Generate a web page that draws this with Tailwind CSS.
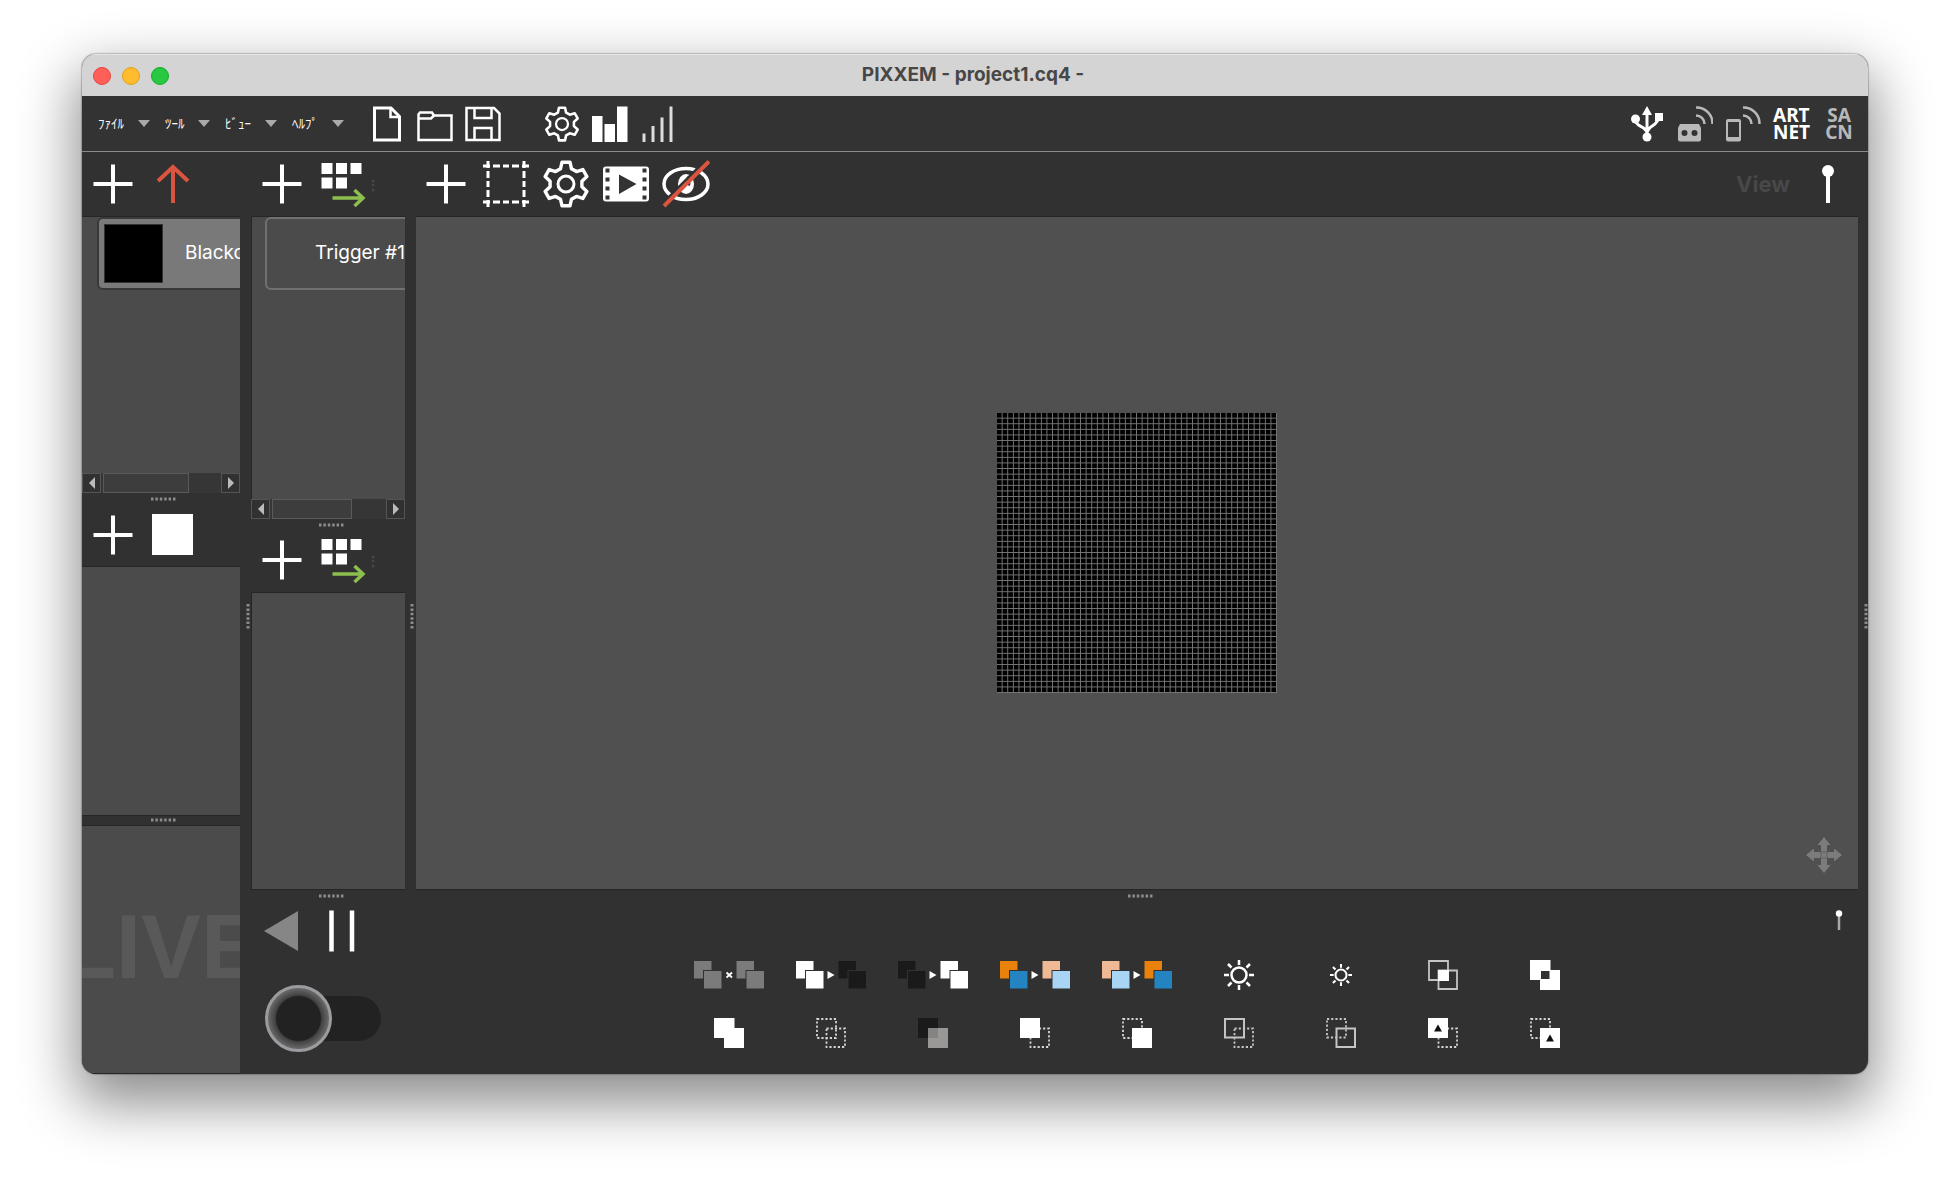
<!DOCTYPE html>
<html lang="ja">
<head>
<meta charset="UTF-8" />
<meta name="viewport" content="width=device-width, initial-scale=1.0"/>
<title>PIXXEM - project1.cq4 -</title>
<script src="https://cdn.jsdelivr.net/npm/@tailwindcss/browser@4"></script>
</head>
<body class="bg-white min-h-screen flex flex-col px-[82px] pt-[54px] pb-[108px] font-['Inter','Noto_Sans_CJK_JP',sans-serif]">

<!-- shared icons -->
<svg class="hidden">
  <symbol id="plus" viewBox="0 0 48 48"><path d="M24 4.500V43.500M4.500 24H43.500" stroke="#fff" stroke-width="4"/></symbol>
  <symbol id="gear" viewBox="-24 -24 48 48">
    <path d="M-5.500-15.200L-4-21.800H4L5.500-15.200L10.400-12.400L16.900-14.400L20.900-7.400L15.900-2.800V2.800L20.900 7.400L16.900 14.400L10.400 12.400L5.500 15.200L4 21.800H-4L-5.500 15.200L-10.400 12.400L-16.900 14.400L-20.900 7.400L-15.900 2.800V-2.800L-20.900-7.400L-16.900-14.400L-10.400-12.400Z" fill="none" stroke="#fff" stroke-width="3.400" stroke-linejoin="round"/>
    <circle r="8" fill="none" stroke="#fff" stroke-width="3"/>
  </symbol>
  <symbol id="cells" viewBox="0 0 48 48">
    <path d="M3.500 3h11v11h-11zM18 3h11v11H18zM32.500 3h11v11h-11zM3.500 17.500h11v11h-11zM18 17.500h11v11H18z" fill="#fff"/>
    <path d="M14.500 38H45M36.500 30L45 38L36.500 46" fill="none" stroke="#8dbf4f" stroke-width="3.500"/>
  </symbol>
  <symbol id="dots-h" viewBox="0 0 26 4"><path d="M1 2H26" stroke="#8c8c8c" stroke-width="3" stroke-dasharray="2.500 1.900"/></symbol>
  <symbol id="dots-v" viewBox="0 0 4 26"><path d="M2 1V26" stroke="#8c8c8c" stroke-width="3" stroke-dasharray="2.500 1.900"/></symbol>
  <symbol id="waves" viewBox="0 0 18 18"><path d="M0 1.500A16 16 0 0 1 16.500 18M0 9.500A8.500 8.500 0 0 1 8.500 18" fill="none" stroke="#b9b9b9" stroke-width="2.500"/></symbol>
</svg>

<main class="flex-1 flex flex-col rounded-[14px] overflow-hidden bg-[#313131] shadow-[0_0_1px_1px_rgba(0,0,0,0.2),0_24px_56px_6px_rgba(0,0,0,0.45)]">

  <!-- title bar -->
  <header class="h-[42px] bg-[#d4d4d4] border-t border-[#e6e6e6] flex items-center px-[11px]">
    <div class="flex-1 flex gap-[11px]">
      <button aria-label="閉じる" class="size-[18px] rounded-full bg-[#ff5f57] border border-[#e2463f]"></button>
      <button aria-label="最小化" class="size-[18px] rounded-full bg-[#febc2e] border border-[#e1a116]"></button>
      <button aria-label="最大化" class="size-[18px] rounded-full bg-[#28c840] border border-[#12ac28]"></button>
    </div>
    <h1 class="text-[19px] font-bold text-[#474747] pr-1">PIXXEM - project1.cq4 -</h1>
    <div class="flex-1"></div>
  </header>

  <!-- menu bar -->
  <nav class="h-14 bg-[#333] border-b border-[#8a8a8a] flex items-center pl-4 pr-[11px] text-[13px] text-white">
    <button class="w-[67px] flex items-center justify-between pr-[15px]">ﾌｧｲﾙ<svg class="w-3 h-[7px]" viewBox="0 0 12 7"><path d="M0 0H12L6 7Z" fill="#aaa"/></svg></button>
    <button class="w-[60px] flex items-center justify-between pr-[15px]">ﾂｰﾙ<svg class="w-3 h-[7px]" viewBox="0 0 12 7"><path d="M0 0H12L6 7Z" fill="#aaa"/></svg></button>
    <button class="w-[67px] flex items-center justify-between pr-[15px]">ﾋﾞｭｰ<svg class="w-3 h-[7px]" viewBox="0 0 12 7"><path d="M0 0H12L6 7Z" fill="#aaa"/></svg></button>
    <button class="w-[67px] flex items-center justify-between pr-[15px]">ﾍﾙﾌﾟ<svg class="w-3 h-[7px]" viewBox="0 0 12 7"><path d="M0 0H12L6 7Z" fill="#aaa"/></svg></button>

    <div class="flex gap-3 ml-[10px]">
      <button aria-label="新規"><svg class="size-9" viewBox="0 0 36 36" fill="none" stroke="#fff" stroke-width="3"><path d="M5.500 2H22L30.500 10.500V34H5.500Z"/><path d="M21.500 2V11H30.500" stroke-width="2.500"/></svg></button>
      <button aria-label="開く"><svg class="size-9" viewBox="0 0 36 36" fill="none" stroke="#fff" stroke-width="2.500"><path d="M1.500 34V8.500L3 6.500H15L17 9.500H34.500V34Z"/><path d="M2 12.500H14L17 9.500"/></svg></button>
      <button aria-label="保存"><svg class="size-9" viewBox="0 0 36 36" fill="none" stroke="#fff" stroke-width="2.500"><path d="M1.500 2H29L34.500 7.500V34H1.500Z"/><path d="M9.500 2V12H26.500V2M9.500 34V22H26.500V34"/></svg></button>
    </div>
    <div class="flex gap-3 ml-[43px]">
      <button aria-label="設定"><svg class="size-9"><use href="#gear"/></svg></button>
      <button aria-label="レベル"><svg class="size-9" viewBox="0 0 36 36" fill="#fff"><path d="M0 10H10.500V36H0ZM12.500 18H23V36H12.500ZM25 .500H35.500V36H25Z"/></svg></button>
      <button aria-label="信号"><svg class="size-9" viewBox="0 0 36 36" stroke="#ddd" stroke-width="3"><path d="M4 27.500V36M13 20V36M22 11.500V36M31 .500V36"/></svg></button>
    </div>

    <div class="flex-1"></div>
    <div class="flex gap-3">
      <button aria-label="USB"><svg class="size-9" viewBox="0 0 36 36"><path d="M18 5V32M6.500 14C6.500 21 17 20 17.500 26M29.500 11C29.500 20 19 19 18.500 26" fill="none" stroke="#fff" stroke-width="3"/><path d="M18 0L23 9H13ZM26 7H34V15H26Z" fill="#fff"/><circle cx="6.500" cy="13" r="4.500" fill="#fff"/><circle cx="18" cy="31" r="4.500" fill="#fff"/></svg></button>
      <button aria-label="リモート"><svg class="size-9" viewBox="0 0 36 36"><path d="M3 18H22L24 22V33.500Q24 35.500 22 35.500H3Q1 35.500 1 33.500V22Z" fill="#b9b9b9"/><circle cx="7.500" cy="27" r="3" fill="#333"/><circle cx="17.500" cy="27" r="3" fill="#333"/><use href="#waves" x="19" y="0" width="18" height="18"/></svg></button>
      <button aria-label="モバイル"><svg class="size-9" viewBox="0 0 36 36"><rect x="1" y="13" width="15" height="22.500" rx="2" fill="#b9b9b9"/><path d="M3 16H14V31H3Z" fill="#333"/><use href="#waves" x="18" y="0" width="18" height="18"/></svg></button>
      <button class="w-9 font-['Noto_Sans'] font-bold text-[19px] leading-[17px]">ART<br>NET</button>
      <button class="w-9 font-['Noto_Sans'] font-bold text-[19px] leading-[17px] text-[#b9b9b9]">SA<br>CN</button>
    </div>
  </nav>

  <div class="flex-1 flex">

    <!-- scenes -->
    <section class="w-[158px] flex flex-col border-b border-[#262626]">
      <div class="h-16 flex items-center gap-3 pl-[7px]">
        <button aria-label="シーン追加"><svg class="size-12"><use href="#plus"/></svg></button>
        <button aria-label="上へ"><svg class="size-12" viewBox="0 0 48 48"><path d="M24 6V43M9 21L24 7L39 21" fill="none" stroke="#d9553f" stroke-width="4"/></svg></button>
      </div>
      <div class="flex-278 min-h-0 flex flex-col">
        <div class="flex-1 bg-[#4b4b4b] border-t border-[#262626] pl-[15px] overflow-hidden">
          <button class="w-[280px] h-[73px] bg-[#797979] border-2 border-[#393939] rounded-md flex items-center gap-[22px] pl-[5px] text-[19px] text-white">
            <span class="size-[59px] bg-black border border-[#333]"></span>Blackout
          </button>
        </div>
        <div class="h-5 bg-[#363636] flex justify-between">
          <button aria-label="左へ" class="w-[19px] bg-[#313131] border border-[#555] flex items-center justify-center"><svg class="w-[6px] h-3" viewBox="0 0 6 12"><path d="M6 0V12L0 6Z" fill="#bbb"/></svg></button>
          <div class="flex-1 px-[2px]"><div class="w-[86px] h-5 bg-[#3d3d3d] border border-[#5a5a5a]"></div></div>
          <button aria-label="右へ" class="w-[19px] bg-[#313131] border border-[#555] flex items-center justify-center"><svg class="w-[6px] h-3" viewBox="0 0 6 12"><path d="M0 0V12L6 6Z" fill="#bbb"/></svg></button>
        </div>
      </div>
      <div class="h-3 flex items-center justify-center pl-1"><svg class="w-[26px] h-1"><use href="#dots-h"/></svg></div>
      <div class="h-[61px] flex items-center gap-3 pl-[7px] pb-[2px]">
        <button aria-label="色追加"><svg class="size-12"><use href="#plus"/></svg></button>
        <button aria-label="色" class="size-[41px] ml-[3px] bg-white"></button>
      </div>
      <div class="flex-248 bg-[#4b4b4b] border-y border-[#262626]"></div>
      <div class="h-[9px] flex items-center justify-center pl-1"><svg class="w-[26px] h-1"><use href="#dots-h"/></svg></div>
      <div class="flex-248 bg-[#4b4b4b] border-t border-[#262626] flex items-center justify-center overflow-hidden font-['Liberation_Sans'] font-bold text-[90px] leading-[90px] text-[#595959]"><span class="pb-1">LIVE</span></div>
    </section>

    <div class="w-[11px] flex items-center justify-center pt-[6px] pl-[4px]"><svg class="w-1 h-[26px]"><use href="#dots-v"/></svg></div>

    <!-- triggers -->
    <section class="w-[154px] flex flex-col">
      <div class="h-16 flex items-center gap-3 pl-[7px]">
        <button aria-label="トリガー追加"><svg class="size-12"><use href="#plus"/></svg></button>
        <button aria-label="割り当て"><svg class="size-12"><use href="#cells"/></svg></button>
        <span class="-ml-3 text-[14px] font-bold text-[#4a4a4a]">⋮</span>
      </div>
      <div class="flex-303 min-h-0 flex flex-col">
        <div class="flex-1 bg-[#4b4b4b] border-t border-l border-[#262626] pl-[13px] overflow-hidden">
          <button class="w-[280px] h-[73px] border-2 border-[#707070] rounded-md pl-12 text-left text-[19px] text-white">Trigger #1</button>
        </div>
        <div class="h-5 bg-[#363636] flex justify-between">
          <button aria-label="左へ" class="w-[19px] bg-[#313131] border border-[#555] flex items-center justify-center"><svg class="w-[6px] h-3" viewBox="0 0 6 12"><path d="M6 0V12L0 6Z" fill="#bbb"/></svg></button>
          <div class="flex-1 px-[2px]"><div class="w-20 h-5 bg-[#3d3d3d] border border-[#5a5a5a]"></div></div>
          <button aria-label="右へ" class="w-[19px] bg-[#313131] border border-[#555] flex items-center justify-center"><svg class="w-[6px] h-3" viewBox="0 0 6 12"><path d="M0 0V12L6 6Z" fill="#bbb"/></svg></button>
        </div>
      </div>
      <div class="h-3 flex items-center justify-center pl-[6px]"><svg class="w-[26px] h-1"><use href="#dots-h"/></svg></div>
      <div class="h-[61px] flex items-center gap-3 pl-[7px] pb-[2px]">
        <button aria-label="グループ追加"><svg class="size-12"><use href="#plus"/></svg></button>
        <button aria-label="割り当て"><svg class="size-12"><use href="#cells"/></svg></button>
        <span class="-ml-3 text-[14px] font-bold text-[#4a4a4a]">⋮</span>
      </div>
      <div class="flex-297 bg-[#4b4b4b] border-y border-l border-[#262626]"></div>
      <!-- transport -->
      <div class="h-[184px] flex flex-col">
        <div class="h-3 flex items-center justify-center pl-[6px]"><svg class="w-[26px] h-1"><use href="#dots-h"/></svg></div>
        <div class="h-[60px] flex items-center gap-3 pl-[7px] pb-[2px]">
          <button aria-label="逆再生"><svg class="size-12" viewBox="0 0 48 48"><path d="M40 4V44L6 24Z" fill="#868686"/></svg></button>
          <button aria-label="一時停止"><svg class="size-12" viewBox="0 0 48 48"><path d="M13.500 3.500V44.500M34 3.500V44.500" stroke="#fff" stroke-width="4.500"/></svg></button>
        </div>
        <div class="pt-[34px] pl-[22px]">
          <input type="checkbox" aria-label="再生スイッチ" class="block relative appearance-none w-[108px] h-[45px] rounded-full bg-[#222] before:absolute before:-left-2 before:-top-[11px] before:size-[67px] before:rounded-full before:border-3 before:border-[#9c9ca0] before:bg-[radial-gradient(closest-side,#222_72%,#404040_76%,#6a6a6a_100%)]">
        </div>
      </div>
    </section>

    <div class="w-[11px] flex items-center justify-center pt-[6px] pl-[2px]"><svg class="w-1 h-[26px]"><use href="#dots-v"/></svg></div>

    <!-- canvas -->
    <section class="flex-1 flex flex-col">
      <div class="h-16 flex items-center gap-3 pl-[6px]">
        <button aria-label="追加"><svg class="size-12"><use href="#plus"/></svg></button>
        <button aria-label="選択"><svg class="size-12" viewBox="0 0 48 48" fill="none" stroke="#fff" stroke-width="3" stroke-dasharray="7 3 7 3 6 3 7 3 7"><path d="M1 6H47"/><path d="M1 42H47"/><path d="M6 1V47"/><path d="M42 1V47"/></svg></button>
        <button aria-label="設定"><svg class="size-12"><use href="#gear"/></svg></button>
        <button aria-label="動画"><svg class="size-12" viewBox="0 0 48 48"><rect x="1" y="6.500" width="46" height="35" rx="3" fill="#fff"/><path d="M17 14.500V34L34.500 24ZM3.500 8.500h4v4h-4zM3.500 17.500h4v4h-4zM3.500 26.500h4v4h-4zM3.500 35.500h4v4h-4zM40.500 8.500h4v4h-4zM40.500 17.500h4v4h-4zM40.500 26.500h4v4h-4zM40.500 35.500h4v4h-4z" fill="#333"/></svg></button>
        <button aria-label="表示切替"><svg class="size-12" viewBox="0 0 48 48"><ellipse cx="24" cy="24" rx="22" ry="15.500" fill="none" stroke="#fff" stroke-width="3.500"/><ellipse cx="24" cy="24" rx="8" ry="10" fill="#fff"/><path d="M27 17A5 5 0 0 0 28 25" fill="none" stroke="#313131" stroke-width="3"/><path d="M-1 45.500L44 0" stroke="#313131" stroke-width="3"/><path d="M2 46L47 1.500" stroke="#d9553f" stroke-width="4"/></svg></button>
        <div class="flex-1"></div>
        <span class="text-[22px] font-bold text-[#484848] mr-[2px]">View</span>
        <button aria-label="ピン留め" class="mr-[6px]"><svg class="size-12" viewBox="0 0 48 48"><path d="M24 10V43" stroke="#fff" stroke-width="4"/><circle cx="24" cy="11" r="6" fill="#fff"/></svg></button>
      </div>
      <div class="relative flex-1 flex items-center justify-center bg-[#505050] border-y border-[#262626]">
        <!-- 50 x 50 pixel matrix -->
        <svg class="size-[280px]" viewBox="0 0 280 280" shape-rendering="crispEdges">
          <defs><pattern id="px" width="5.600" height="5.600" patternUnits="userSpaceOnUse"><rect width="4.400" height="4.400" fill="#000"/></pattern></defs>
          <rect width="280" height="280" fill="#777"/>
          <rect width="280" height="280" fill="url(#px)"/>
        </svg>
        <button aria-label="移動" class="absolute right-4 bottom-4"><svg class="size-9" viewBox="0 0 36 36"><path d="M18 0L24.500 8H21V15H28V11.500L36 18L28 24.500V21H21V28H24.500L18 36L11.500 28H15V21H8V24.500L0 18L8 11.500V15H15V8H11.500Z" fill="#7c7c7c"/><path d="M15 15H21V21H15Z" fill="none" stroke="#606060"/></svg></button>
      </div>

      <!-- effects -->
      <div class="h-[184px] flex flex-col">
        <div class="h-3 flex items-center justify-center pl-[6px]"><svg class="w-[26px] h-1"><use href="#dots-h"/></svg></div>
        <div class="h-11 flex justify-end pt-2 pr-[13px]">
          <button aria-label="ピン留め" class="h-5"><svg class="w-3 h-5" viewBox="0 0 12 20"><path d="M6 4V20" stroke="#a8a8a8" stroke-width="2.500"/><circle cx="6" cy="3.500" r="3.200" fill="#fff"/></svg></button>
        </div>
        <div class="mx-auto grid grid-cols-[repeat(9,102px)] auto-rows-[58px] items-center justify-items-center">
          <button aria-label="なし"><svg class="w-[70px] h-7" viewBox="0 0 70 28"><path d="M0 0h17.500v9H9v8.500H0zM10 10h17.500v17.500H10zM42.500 0H60v9h-8.500v8.500h-9zM52.500 10H70v17.500H52.500z" fill="#7b7b7b"/><path d="M32.500 11.500L38 16.500M38 11.500L32.500 16.500" stroke="#fff" stroke-width="1.800"/></svg></button>
          <button aria-label="白から黒"><svg class="w-[70px] h-7" viewBox="0 0 70 28"><path d="M0 0h17.500v9H9v8.500H0zM10 10h17.500v17.500H10z" fill="#fff"/><path d="M42.500 0H60v9h-8.500v8.500h-9zM52.500 10H70v17.500H52.500z" fill="#1a1a1a"/><path d="M31.500 10V18L38.500 14Z" fill="#fff"/></svg></button>
          <button aria-label="黒から白"><svg class="w-[70px] h-7" viewBox="0 0 70 28"><path d="M0 0h17.500v9H9v8.500H0zM10 10h17.500v17.500H10z" fill="#1a1a1a"/><path d="M42.500 0H60v9h-8.500v8.500h-9zM52.500 10H70v17.500H52.500z" fill="#fff"/><path d="M31.500 10V18L38.500 14Z" fill="#fff"/></svg></button>
          <button aria-label="彩度ダウン"><svg class="w-[70px] h-7" viewBox="0 0 70 28"><path d="M0 0h17.500v9H9v8.500H0z" fill="#e8820c"/><path d="M10 10h17.500v17.500H10z" fill="#2484c2"/><path d="M42.500 0H60v9h-8.500v8.500h-9z" fill="#f0b995"/><path d="M52.500 10H70v17.500H52.500z" fill="#a9d5f5"/><path d="M31.500 10V18L38.500 14Z" fill="#fff"/></svg></button>
          <button aria-label="彩度アップ"><svg class="w-[70px] h-7" viewBox="0 0 70 28"><path d="M0 0h17.500v9H9v8.500H0z" fill="#f0b995"/><path d="M10 10h17.500v17.500H10z" fill="#a9d5f5"/><path d="M42.500 0H60v9h-8.500v8.500h-9z" fill="#e8820c"/><path d="M52.500 10H70v17.500H52.500z" fill="#2484c2"/><path d="M31.500 10V18L38.500 14Z" fill="#fff"/></svg></button>
          <button aria-label="明るく"><svg class="size-[30px]" viewBox="0 0 30 30" fill="none" stroke="#fff" stroke-width="2.500"><circle cx="15" cy="15" r="7.500"/><path d="M15 0V5M15 25V30M0 15H5M25 15H30M4 4L7.500 7.500M22.500 22.500L26 26M26 4L22.500 7.500M4 26L7.500 22.500"/></svg></button>
          <button aria-label="暗く"><svg class="size-[22px]" viewBox="0 0 30 30" fill="none" stroke="#fff" stroke-width="2.800"><circle cx="15" cy="15" r="7.500"/><path d="M15 0V5M15 25V30M0 15H5M25 15H30M4 4L7.500 7.500M22.500 22.500L26 26M26 4L22.500 7.500M4 26L7.500 22.500"/></svg></button>
          <button aria-label="交差"><svg class="size-[30px]" viewBox="0 0 30 30" fill="none" stroke="#c4c4c4" stroke-width="1.800"><path d="M1 1H20V20H1ZM10.500 10.500H29V29H10.500Z"/><path d="M11 11H20V20H11Z" fill="#fff" stroke="#fff"/></svg></button>
          <button aria-label="除外"><svg class="size-[30px]" viewBox="0 0 30 30"><path d="M0 0H20.500V10H30V30H10V20H0ZM11 11V19H19.500V11Z" fill="#fff" fill-rule="evenodd"/></svg></button>

          <button aria-label="合成"><svg class="size-[30px]" viewBox="0 0 30 30"><path d="M0 0H20.500V10H30V30H10V20H0Z" fill="#fff"/></svg></button>
          <button aria-label="両方解除"><svg class="size-[30px]" viewBox="0 0 30 30" fill="none" stroke="#d4d4d4" stroke-width="1.800" stroke-dasharray="2.200 2"><path d="M1 1H20V20H1Z"/><path d="M10.500 10.500H29V29H10.500Z"/></svg></button>
          <button aria-label="半透明"><svg class="size-[30px]" viewBox="0 0 30 30"><path d="M0 0H20V20H0Z" fill="#1a1a1a"/><path d="M10 10H30V30H10Z" fill="#9a9797"/><path d="M10 10H20V20H10Z" fill="#868383"/></svg></button>
          <button aria-label="A を前面"><svg class="size-[30px]" viewBox="0 0 30 30"><path d="M10.500 10.500H29V29H10.500Z" fill="none" stroke="#d4d4d4" stroke-width="1.800" stroke-dasharray="2.200 2"/><path d="M0 0H20V20H0Z" fill="#fff"/></svg></button>
          <button aria-label="B を前面"><svg class="size-[30px]" viewBox="0 0 30 30"><path d="M1 1H20V20H1Z" fill="none" stroke="#d4d4d4" stroke-width="1.800" stroke-dasharray="2.200 2"/><path d="M10 10H30V30H10Z" fill="#fff"/></svg></button>
          <button aria-label="A の枠"><svg class="size-[30px]" viewBox="0 0 30 30" fill="none" stroke="#c4c4c4" stroke-width="2"><path d="M1 1H20V19.500H1Z"/><path d="M10.500 10.500H29V29H10.500Z" stroke-width="1.800" stroke-dasharray="2.200 2"/></svg></button>
          <button aria-label="B の枠"><svg class="size-[30px]" viewBox="0 0 30 30" fill="none" stroke="#c4c4c4" stroke-width="2"><path d="M10.500 10.500H29V29H10.500Z"/><path d="M1 1H20V19.500H1Z" stroke-width="1.800" stroke-dasharray="2.200 2"/></svg></button>
          <button aria-label="A マスク"><svg class="size-[30px]" viewBox="0 0 30 30"><path d="M10.500 10.500H29V29H10.500Z" fill="none" stroke="#d4d4d4" stroke-width="1.800" stroke-dasharray="2.200 2"/><path d="M0 0H20V20H0Z" fill="#fff"/><path d="M6 13.500H14L10 6.500Z" fill="#111"/></svg></button>
          <button aria-label="B マスク"><svg class="size-[30px]" viewBox="0 0 30 30"><path d="M1 1H20V20H1Z" fill="none" stroke="#d4d4d4" stroke-width="1.800" stroke-dasharray="2.200 2"/><path d="M10 10H30V30H10Z" fill="#fff"/><path d="M16 23.500H24L20 16.500Z" fill="#111"/></svg></button>
        </div>
      </div>
    </section>

    <div class="w-[10px] flex items-center justify-center pt-[6px] pl-[6px]"><svg class="w-1 h-[26px]"><use href="#dots-v"/></svg></div>
  </div>
</main>
</body>
</html>
